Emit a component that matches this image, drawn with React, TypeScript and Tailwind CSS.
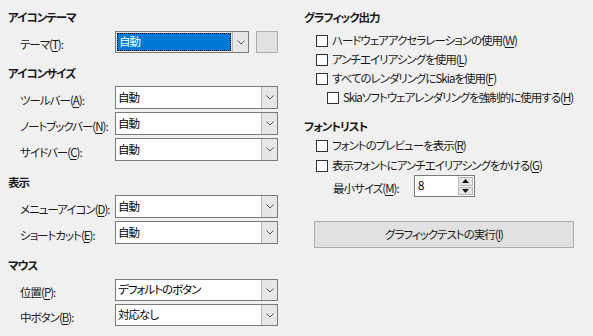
import React from "react";

const font = "font-['Noto_Sans_CJK_JP','Noto_Sans',sans-serif] [font-feature-settings:'palt'] tracking-[-1px] whitespace-nowrap";

function Chevron() {
  return (
    <svg width="8" height="5" viewBox="0 0 8 5">
      <polyline points="0.5,0.5 4,4 7.5,0.5" fill="none" stroke="#555" strokeWidth="1" />
    </svg>
  );
}

function Combo({ value }: { value: string }) {
  return (
    <div className="w-[163px] h-full flex border border-[#7a7a7a] bg-white">
      <div className="flex-1 flex items-center pl-[2px] text-[11.5px] text-black">{value}</div>
      <div className="w-[16px] flex items-center justify-center bg-[#e6e6e6] border-l border-[#b5b5b5]">
        <Chevron />
      </div>
    </div>
  );
}

function Label({ text, k }: { text: string; k: string }) {
  return (
    <span className="text-[11.5px] text-[#1a1a1a]">
      {text}(<span className="underline underline-offset-2">{k}</span>):
    </span>
  );
}

function Row({ text, k, value, last }: { text: string; k: string; value: string; last?: boolean }) {
  return (
    <div className={`flex items-center ${last ? "h-[22px]" : "h-[23px]"}`}>
      <div className="w-[107px] pl-[12px]">
        <Label text={text} k={k} />
      </div>
      <Combo value={value} />
    </div>
  );
}

function Heading({ children }: { children: React.ReactNode }) {
  return <div className="h-[18px] leading-[18px] text-[11.5px] font-bold text-[#1a1a1a]">{children}</div>;
}

function Check({ text, k, indent }: { text: string; k: string; indent?: boolean }) {
  return (
    <div className={`h-[19px] flex items-center ${indent ? "pl-[23px]" : "pl-[12px]"}`}>
      <div className="w-[12px] h-[12px] border border-[#333] bg-white shrink-0" />
      <span className="ml-[4px] text-[11.5px] text-[#1a1a1a]">
        {text}(<span className="underline underline-offset-2">{k}</span>)
      </span>
    </div>
  );
}

export default function App() {
  return (
    <div className={`w-[593px] h-[336px] bg-[#f0f0f0] flex ${font}`}>
      {/* Left column */}
      <div className="w-[296px] pl-[8px] pt-[8px] flex flex-col">
        <Heading>アイコンテーマ</Heading>
        <div className="mt-[5px] h-[22px] flex items-center">
          <div className="w-[107px] pl-[12px]">
            <Label text="テーマ" k="T" />
          </div>
          <div className="w-[134px] h-full flex border border-[#7a7a7a] bg-[#e6e6e6]">
            <div className="flex-1 m-[1px] bg-[#0078d7] outline-1 outline-dotted outline-black -outline-offset-1 flex items-center pl-[2px] text-[11.5px] text-white">
              自動
            </div>
            <div className="w-[16px] flex items-center justify-center bg-[#e6e6e6] border-l border-[#b5b5b5]">
              <Chevron />
            </div>
          </div>
          <div className="ml-[7px] w-[22px] h-full bg-[#e1e1e1] border border-[#adadad]" />
        </div>

        <div className="mt-[11px]">
          <Heading>アイコンサイズ</Heading>
        </div>
        <div className="mt-[4px] flex flex-col gap-[3px]">
          <Row text="ツールバー" k="A" value="自動" />
          <Row text="ノートブックバー" k="N" value="自動" />
          <Row text="サイドバー" k="C" value="自動" />
        </div>

        <div className="mt-[12px]">
          <Heading>表示</Heading>
        </div>
        <div className="mt-[4px] flex flex-col gap-[3px]">
          <Row text="メニューアイコン" k="D" value="自動" />
          <Row text="ショートカット" k="E" value="自動" />
        </div>

        <div className="mt-[12px]">
          <Heading>マウス</Heading>
        </div>
        <div className="mt-[5px] flex flex-col gap-[3px]">
          <Row text="位置" k="P" value="デフォルトのボタン" last />
          <Row text="中ボタン" k="B" value="対応なし" last />
        </div>
      </div>

      {/* Right column */}
      <div className="flex-1 pl-[8px] pt-[8px] flex flex-col">
        <Heading>グラフィック出力</Heading>
        <div className="mt-[5px] flex flex-col">
          <Check text="ハードウェアアクセラレーションの使用" k="W" />
          <Check text="アンチエイリアシングを使用" k="L" />
          <Check text="すべてのレンダリングにSkiaを使用" k="F" />
          <Check text="Skiaソフトウェアレンダリングを強制的に使用する" k="H" indent />
        </div>

        <div className="mt-[10px]">
          <Heading>フォントリスト</Heading>
        </div>
        <div className="mt-[1px] flex flex-col gap-[1px]">
          <Check text="フォントのプレビューを表示" k="R" />
          <Check text="表示フォントにアンチエイリアシングをかける" k="G" />
        </div>
        <div className="h-[22px] flex items-center">
          <div className="w-[110px] pl-[29px]">
            <Label text="最小サイズ" k="M" />
          </div>
          <div className="w-[61px] h-full flex border border-[#7a7a7a] bg-white">
            <div className="flex-1 flex items-center pl-[3px] text-[11.5px] text-black">8</div>
            <div className="w-[17px] flex flex-col p-[1px] gap-[1px]">
              <div className="flex-1 flex items-center justify-center bg-[#e6e6e6] border border-[#b5b5b5]">
                <svg width="7" height="4" viewBox="0 0 7 4"><polygon points="0,4 3.5,0 7,4" fill="#111" /></svg>
              </div>
              <div className="flex-1 flex items-center justify-center bg-[#e6e6e6] border border-[#b5b5b5]">
                <svg width="7" height="4" viewBox="0 0 7 4"><polygon points="0,0 3.5,4 7,0" fill="#111" /></svg>
              </div>
            </div>
          </div>
        </div>

        <div className="mt-[24px] ml-[10px] w-[260px] h-[27px] bg-[#e1e1e1] border border-[#adadad] flex items-center justify-center text-[11.5px] text-[#1a1a1a]">
          グラフィックテストの実行(<span className="underline underline-offset-2">I</span>)
        </div>
      </div>
    </div>
  );
}
